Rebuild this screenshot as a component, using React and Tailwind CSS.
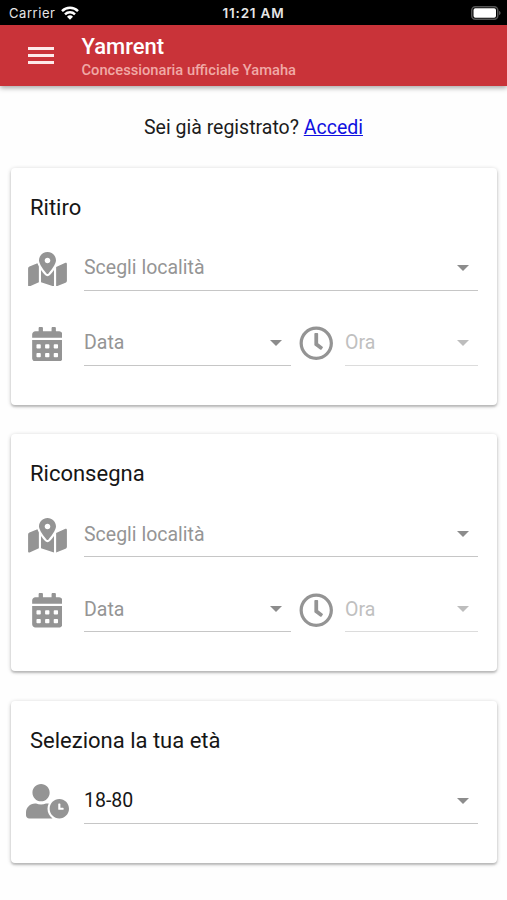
import { FaMapMarkedAlt, FaCalendarAlt, FaRegClock, FaUserClock } from "react-icons/fa";

function Field({ label, tone = "text-[#959595]", disabled = false, className = "" }) {
  return (
    <div
      className={`flex h-[45px] items-center justify-between border-b-[1.5px] pr-[9px] text-[19.5px] leading-none ${
        disabled ? "border-[#dcdcdc] text-[#c0c0c0]" : `border-[#c6c6c6] ${tone}`
      } ${className}`}
    >
      <span className="whitespace-nowrap pl-[0.5px]">{label}</span>
      <svg viewBox="0 0 12 6" className={`h-1.5 w-3 ${disabled ? "text-[#bdbdbd]" : "text-[#8c8c8c]"}`}>
        <path d="M0 0h12L6 6z" fill="currentColor" />
      </svg>
    </div>
  );
}

function Card({ title, className, children }) {
  return (
    <section
      className={`mx-auto w-[486px] rounded-[4px] bg-white pr-[19px] pt-[26px] shadow-[0_1px_4px_rgba(0,0,0,0.22),0_2px_2px_rgba(0,0,0,0.16)] ${className}`}
    >
      <h2 className="pl-[19.5px] text-[22px] leading-7 text-[#161616]">{title}</h2>
      {children}
    </section>
  );
}

function IconCell({ children }) {
  return <div className="flex w-[73px] justify-center pt-px text-[#949494]">{children}</div>;
}

function Booking({ title }) {
  return (
    <Card title={title} className="h-[237px]">
      <div className="mt-[24px] flex items-center">
        <IconCell><FaMapMarkedAlt className="h-[34.5px] w-[39px]" /></IconCell>
        <Field label="Scegli località" className="flex-1" />
      </div>
      <div className="mt-[30px] flex items-center">
        <IconCell><FaCalendarAlt className="h-[34.5px] w-[30.5px]" /></IconCell>
        <Field label="Data" className="w-[207px]" />
        <div className="flex w-[52px] justify-center text-[#949494]">
          <FaRegClock className="h-[34.5px] w-[34.5px]" />
        </div>
        <Field label="Ora" disabled className="ml-[2px] flex-1" />
      </div>
    </Card>
  );
}

export default function App() {
  return (
    <div className="h-[900px] w-[507px] overflow-hidden bg-[#fefefe] font-['Roboto',sans-serif]">
      <div className="grid h-[25px] grid-cols-3 items-center bg-black pl-[9px] pr-[6px] pt-[2px] text-[13px] text-[#e6e6e6] font-['Inter',sans-serif]">
        <div className="flex items-center gap-[6px]">
          <span className="tracking-[0.55px]">Carrier</span>
          <svg viewBox="0 0 18 14" className="-mt-[2px] h-[14px] w-[18px]" fill="none" stroke="#fff" strokeWidth="2.5">
            <path d="M1 5.1a11.5 11.5 0 0 1 16 0M4 8.3a7.2 7.2 0 0 1 10 0" />
            <path d="M6 10.8a4.3 4.3 0 0 1 6 0L9 13.8z" fill="#fff" stroke="none" />
          </svg>
        </div>
        <span className="-ml-[3px] whitespace-nowrap text-center text-[13.5px] font-semibold tracking-[0.8px]">11:21 AM</span>
        <svg viewBox="0 0 30 14" className="-mt-[2px] h-[14px] w-[30px] justify-self-end">
          <rect x="0.75" y="0.75" width="26" height="12.5" rx="3.5" fill="none" stroke="#555" strokeWidth="1.5" />
          <rect x="2.5" y="2.3" width="22.5" height="9.4" rx="1.8" fill="#fff" />
          <path d="M28 5v4c1-.3 1.6-1 1.6-2S29 5.300 28 5z" fill="#555" />
        </svg>
      </div>
      <header className="flex h-[61px] items-center bg-[#c93339] pl-7 shadow-[0_2px_5px_rgba(0,0,0,0.35)]">
        <div className="flex w-[53.5px] flex-col gap-1">
          <div className="h-[3px] w-[26px] bg-[#fdeaea]" />
          <div className="h-[3px] w-[26px] bg-[#fdeaea]" />
          <div className="h-[3px] w-[26px] bg-[#fdeaea]" />
        </div>
        <div className="pt-[3px] font-medium">
          <h1 className="text-[22px] leading-[26px] text-white">Yamrent</h1>
          <p className="text-[14.7px] leading-5 text-[#f0a9a6]">Concessionaria ufficiale Yamaha</p>
        </div>
      </header>
      <p className="mt-[30px] h-6 text-center text-[19.500px] leading-6 text-[#1c1c1c]">
        Sei già registrato? <a href="#" className="text-[#1010e0] underline">Accedi</a>
      </p>
      <main className="mt-[28px] flex flex-col gap-[29.300px]">
        <Booking title="Ritiro" />
        <Booking title="Riconsegna" />
        <Card title="Seleziona la tua età" className="h-[162px]">
          <div className="mt-[24px] flex items-center">
            <IconCell><FaUserClock className="h-[34.5px] w-[43px]" /></IconCell>
            <Field label="18-80" tone="text-[#161616]" className="flex-1" />
          </div>
        </Card>
      </main>
    </div>
  );
}
